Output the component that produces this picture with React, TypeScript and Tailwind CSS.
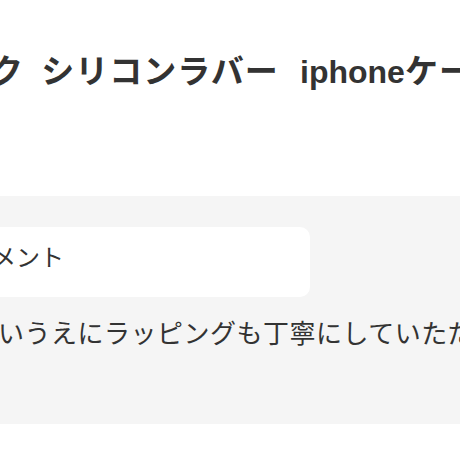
import React from "react";

export default function App() {
  return (
    <div
      className="w-[460px] h-[460px] overflow-hidden bg-white text-[#333333]"
      style={{ fontFamily: '"Liberation Sans", "Noto Sans CJK JP", sans-serif' }}
    >
      <div className="pt-[48px] h-[196px]">
        <h1 className="whitespace-nowrap text-[33px] font-bold leading-[48px] tracking-[1px] ml-[-112px] [word-spacing:7px]">
          ブラック シリコンラバー<span className="[word-spacing:11px]"> </span>
          <span className="text-[32px] tracking-normal">iphone</span>ケース
        </h1>
      </div>
      <div className="bg-[#f5f5f5] h-[228px] pt-[31px]">
        <div className="ml-[-40px] w-[350px] h-[70px] rounded-[10px] bg-white flex items-center pl-[8px] pb-[8px]">
          <span className="whitespace-nowrap text-[24px]">コメント</span>
        </div>
        <p className="whitespace-nowrap text-[26px] leading-[36px] tracking-[0.5px] mt-[19px] ml-[-108px]">
          発送も早いうえにラッピングも丁寧にしていただきました
        </p>
      </div>
    </div>
  );
}
